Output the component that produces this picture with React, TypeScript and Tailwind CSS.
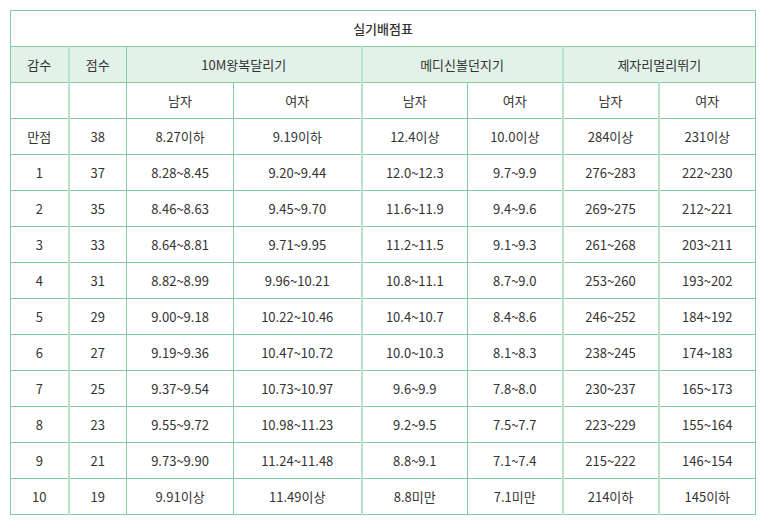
const rows: string[][] = [
  ["만점", "38", "8.27이하", "9.19이하", "12.4이상", "10.0이상", "284이상", "231이상"],
  ["1", "37", "8.28~8.45", "9.20~9.44", "12.0~12.3", "9.7~9.9", "276~283", "222~230"],
  ["2", "35", "8.46~8.63", "9.45~9.70", "11.6~11.9", "9.4~9.6", "269~275", "212~221"],
  ["3", "33", "8.64~8.81", "9.71~9.95", "11.2~11.5", "9.1~9.3", "261~268", "203~211"],
  ["4", "31", "8.82~8.99", "9.96~10.21", "10.8~11.1", "8.7~9.0", "253~260", "193~202"],
  ["5", "29", "9.00~9.18", "10.22~10.46", "10.4~10.7", "8.4~8.6", "246~252", "184~192"],
  ["6", "27", "9.19~9.36", "10.47~10.72", "10.0~10.3", "8.1~8.3", "238~245", "174~183"],
  ["7", "25", "9.37~9.54", "10.73~10.97", "9.6~9.9", "7.8~8.0", "230~237", "165~173"],
  ["8", "23", "9.55~9.72", "10.98~11.23", "9.2~9.5", "7.5~7.7", "223~229", "155~164"],
  ["9", "21", "9.73~9.90", "11.24~11.48", "8.8~9.1", "7.1~7.4", "215~222", "146~154"],
  ["10", "19", "9.91이상", "11.49이상", "8.8미만", "7.1미만", "214이하", "145이하"],
];

const cell = "h-[36px] border border-[#86cba5] text-center align-middle p-0";
const thick = "border-l-2 border-l-[#b9e2ca]";

export default function App() {
  return (
    <div
      className="bg-white w-[773px] h-[528px] pt-[10px] pl-[10px] text-[13px] text-[#333]"
      style={{ fontFamily: '"Noto Sans CJK KR", "Noto Sans", sans-serif' }}
    >
      <table className="border-collapse table-fixed w-[745px]">
        <colgroup>
          <col className="w-[58px]" />
          <col className="w-[58px]" />
          <col className="w-[107px]" />
          <col className="w-[128px]" />
          <col className="w-[106px]" />
          <col className="w-[95px]" />
          <col className="w-[96px]" />
          <col className="w-[97px]" />
        </colgroup>
        <thead>
          <tr>
            <th colSpan={8} className={`${cell} font-medium`}>
              실기배점표
            </th>
          </tr>
          <tr className="bg-[#e2f2e8]">
            <th className={`${cell} font-normal`}>감수</th>
            <th className={`${cell} ${thick} font-normal`}>점수</th>
            <th colSpan={2} className={`${cell} font-normal`}>10M왕복달리기</th>
            <th colSpan={2} className={`${cell} ${thick} font-normal`}>메디신볼던지기</th>
            <th colSpan={2} className={`${cell} ${thick} font-normal`}>제자리멀리뛰기</th>
          </tr>
          <tr>
            <th className={`${cell} font-normal`}></th>
            <th className={`${cell} ${thick} font-normal`}></th>
            <th className={`${cell} font-normal`}>남자</th>
            <th className={`${cell} font-normal`}>여자</th>
            <th className={`${cell} ${thick} font-normal`}>남자</th>
            <th className={`${cell} font-normal`}>여자</th>
            <th className={`${cell} ${thick} font-normal`}>남자</th>
            <th className={`${cell} ${thick} font-normal`}>여자</th>
          </tr>
        </thead>
        <tbody>
          {rows.map((r) => (
            <tr key={r[0]}>
              {r.map((v, i) => (
                <td
                  key={i}
                  className={`${cell} ${i === 1 || i === 4 || i === 6 || i === 7 ? thick : ""}`}
                >
                  {v}
                </td>
              ))}
            </tr>
          ))}
        </tbody>
      </table>
    </div>
  );
}
